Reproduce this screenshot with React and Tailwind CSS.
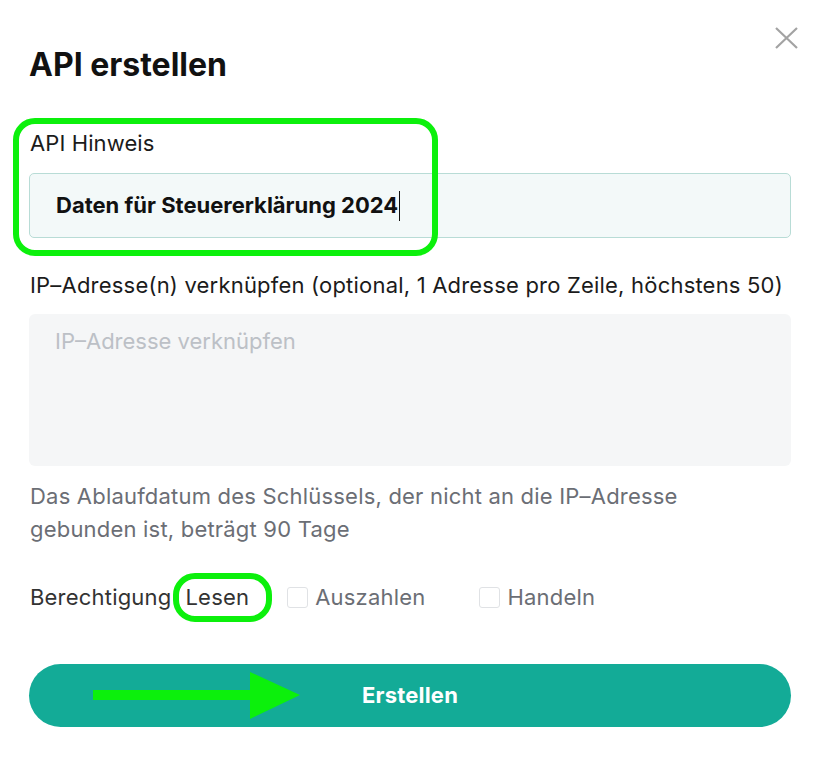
import React from 'react';

const font = { fontFamily: 'Inter, "Noto Sans", sans-serif' };

const Checkbox = ({ label }) => (
  <span className="flex items-center gap-[7px]">
    <span className="w-[21px] h-[21px] rounded-[3px] border border-[#e0e2e5] bg-white" />
    <span className="text-[#6b6e75]">{label}</span>
  </span>
);

export default function App() {
  return (
    <div className="relative w-[818px] h-[766px] bg-white overflow-hidden" style={font}>
      {/* Close */}
      <button className="absolute left-[774px] top-[26px] w-[25px] h-[24px]">
        <svg viewBox="0 0 25 24" className="w-[25px] h-[24px]" fill="none" stroke="#a3a3a3" strokeWidth="2.2">
          <path d="M2 2 L23 22 M23 2 L2 22" />
        </svg>
      </button>

      <div className="pl-[29px] pr-[27px] pt-[46px]">
        <h1 className="text-[32px] leading-[38px] font-bold text-[#111]">API erstellen</h1>

        {/* API Hinweis */}
        <div className="mt-[44px]">
          <label className="block text-[22px] leading-[30px] text-[#1b1b1b] pl-px tracking-[0.1px]">API Hinweis</label>
          <div className="mt-[15px] h-[65px] rounded-[5px] border border-[#b8dcd6] bg-[#f3f9f9] flex items-center pl-[26px]">
            <span className="text-[22px] font-bold text-[#111]">Daten für Steuererklärung 2024</span>
            <span className="w-px h-[30px] bg-[#111] ml-px" />
          </div>
        </div>

        {/* IP */}
        <div className="mt-[32px]">
          <label className="block text-[22px] leading-[30px] text-[#1b1b1b] pl-px tracking-[0.2px] whitespace-nowrap">
            IP–Adresse(n) verknüpfen (optional, 1 Adresse pro Zeile, höchstens 50)
          </label>
          <div className="mt-[14px] h-[152px] rounded-[6px] bg-[#f5f6f7] pl-[26px] pt-[12px]">
            <span className="text-[22px] leading-[30px] text-[#bcc0c6]">IP–Adresse verknüpfen</span>
          </div>
        </div>

        <p className="mt-[14px] text-[22px] leading-[33px] text-[#6b6e75] pl-px tracking-[0.2px]">
          Das Ablaufdatum des Schlüssels, der nicht an die IP–Adresse
          <br />
          gebunden ist, beträgt 90 Tage
        </p>

        {/* Berechtigung */}
        <div className="mt-[35px] h-[32px] flex items-center text-[22px] pl-px tracking-[0.2px]">
          <span className="text-[#333]">Berechtigung</span>
          <span className="ml-[14px] text-[#333]">Lesen</span>
          <span className="ml-[38px]"><Checkbox label="Auszahlen" /></span>
          <span className="ml-[54px]"><Checkbox label="Handeln" /></span>
        </div>

        <button className="mt-[51px] w-full h-[63px] rounded-full bg-[#13ab97] text-white text-[22px] font-bold tracking-[0.2px]">
          Erstellen
        </button>
      </div>

      {/* Annotations */}
      <div className="absolute left-[13px] top-[118px] w-[425px] h-[138px] rounded-[22px] border-[6px] border-[#0cf00c]" />
      <div className="absolute left-[173px] top-[573px] w-[99px] h-[49px] rounded-[22px] border-[6px] border-[#0cf00c]" />
      <svg className="absolute left-[90px] top-[670px]" width="215" height="52" viewBox="0 0 215 52">
        <rect x="3" y="20" width="160" height="10" fill="#0cf00c" />
        <path d="M160 2 L210 25 L160 49 Z" fill="#0cf00c" />
      </svg>
    </div>
  );
}
